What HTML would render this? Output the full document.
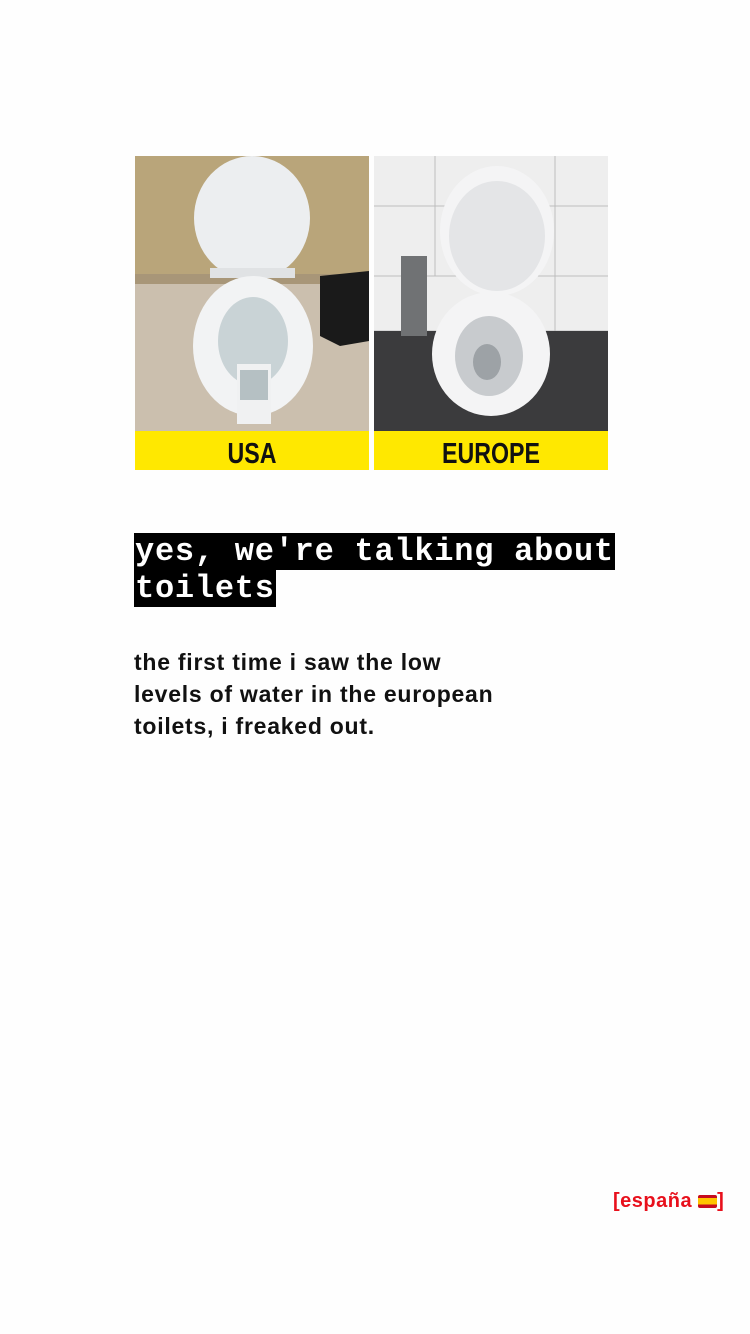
<!DOCTYPE html>
<html><head><meta charset="utf-8"><style>
body{margin:0;width:750px;height:1334px;background:#fefefe;position:relative;overflow:hidden;font-family:"Liberation Sans",sans-serif}
.h{position:absolute;left:134px;top:533px;font-family:"Liberation Mono",monospace;font-weight:bold;font-size:32px;line-height:37px;color:#fff;letter-spacing:0.75px;white-space:nowrap}
.h span{background:#000;padding:0 1px;box-decoration-break:clone;-webkit-box-decoration-break:clone}
.p{position:absolute;left:134px;top:646px;font-weight:bold;font-size:23px;line-height:32px;color:#111;letter-spacing:0.75px}
.es{position:absolute;left:613px;top:1190px;font-weight:bold;font-size:20px;color:#e8101c;letter-spacing:0.5px}
</style></head><body>
<svg style="position:absolute;left:135px;top:156px" width="473" height="314" viewBox="0 0 473 314">
<rect x="0" y="0" width="234" height="314" fill="#b9a57a"/>
<rect x="0" y="120" width="234" height="155" fill="#cbbfae"/>
<rect x="0" y="118" width="234" height="10" fill="#a89678"/>
<ellipse cx="117" cy="62" rx="58" ry="62" fill="#eceef0"/>
<rect x="75" y="112" width="85" height="10" fill="#e0e2e4"/>
<ellipse cx="118" cy="190" rx="60" ry="70" fill="#f2f3f4"/>
<ellipse cx="118" cy="185" rx="35" ry="44" fill="#c9d3d6"/>
<rect x="102" y="208" width="34" height="60" fill="#f0f1f2"/>
<rect x="105" y="214" width="28" height="30" fill="#b5c0c3"/>
<path d="M185 120 L234 115 L234 185 L205 190 L185 180 Z" fill="#1a1a1a"/>
<rect x="0" y="275" width="234" height="39" fill="#ffe800"/>
<text x="0" y="0" text-anchor="middle" font-family="Liberation Sans,sans-serif" font-weight="bold" font-size="29" fill="#111" transform="translate(117,307) scale(0.8,1)">USA</text>
<rect x="239" y="0" width="234" height="314" fill="#eeeeee"/>
<g stroke="#bdbdbd" stroke-width="1"><line x1="239" y1="50" x2="473" y2="50"/><line x1="239" y1="120" x2="473" y2="120"/><line x1="300" y1="0" x2="300" y2="120"/><line x1="420" y1="0" x2="420" y2="175"/><line x1="239" y1="175" x2="473" y2="175"/></g>
<rect x="239" y="175" width="234" height="100" fill="#3b3b3d"/>
<rect x="266" y="100" width="26" height="80" fill="#707274"/>
<ellipse cx="362" cy="75" rx="57" ry="65" fill="#f4f4f5"/>
<ellipse cx="362" cy="80" rx="48" ry="55" fill="#e4e5e7"/>
<ellipse cx="356" cy="198" rx="59" ry="62" fill="#f4f4f5"/>
<ellipse cx="354" cy="200" rx="34" ry="40" fill="#c8cbce"/>
<ellipse cx="352" cy="206" rx="14" ry="18" fill="#9da2a6"/>
<rect x="239" y="275" width="234" height="39" fill="#ffe800"/>
<text x="0" y="0" text-anchor="middle" font-family="Liberation Sans,sans-serif" font-weight="bold" font-size="29" fill="#111" transform="translate(356,307) scale(0.8,1)">EUROPE</text>
</svg>
<div class="h"><span>yes, we're talking about</span><br><span>toilets</span></div>
<div class="p">the first time i saw the low<br>levels of water in the european<br>toilets, i freaked out.</div>
<div class="es">[españa <span style="display:inline-block;width:19px;height:13px;background:linear-gradient(#c60b1e 25%,#ffc400 25% 75%,#c60b1e 75%);vertical-align:-1px;border-radius:2px"></span>]</div>
</body></html>
